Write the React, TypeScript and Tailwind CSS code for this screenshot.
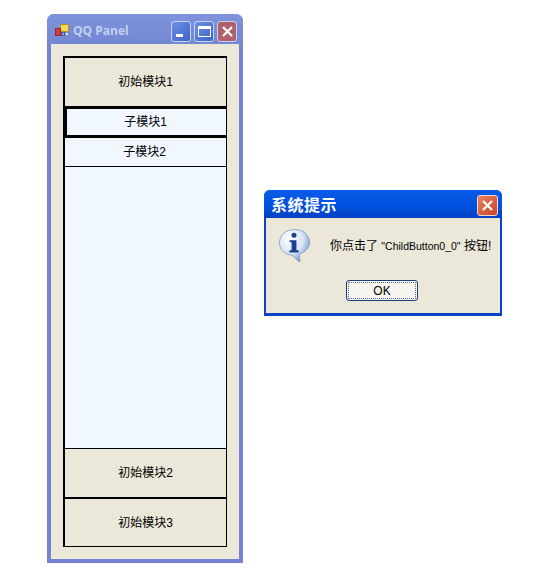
const cjk = "font-['Liberation_Sans','Noto_Sans_CJK_SC',sans-serif]";

function ModuleButton({ label, className }: { label: string; className: string }) {
  return (
    <div className={`flex items-center justify-center bg-[#ebe8d9] text-xs text-black ${className}`}>{label}</div>
  );
}

function ChildButton({ label, className }: { label: string; className: string }) {
  return (
    <div className={`flex items-center justify-center bg-[#f0f7ff] pr-[2px] text-xs text-black border-black ${className}`}>{label}</div>
  );
}

function AppIcon() {
  return (
    <svg width="16" height="14" viewBox="0 0 16 14" className="shrink-0">
      <rect x="6.5" y="0.5" width="8" height="7" fill="#f6d35a" stroke="#b08f30" />
      <rect x="1.5" y="4.5" width="5" height="7" fill="#d63c38" stroke="#8c2a2a" />
      <rect x="7.5" y="8.5" width="3" height="3" fill="#8fa0e0" stroke="#4a5aa8" />
      <rect x="11.5" y="8.5" width="3" height="3" fill="#f0f0f8" stroke="#7a88c0" />
    </svg>
  );
}

function InfoIcon() {
  return (
    <svg width="33" height="35" viewBox="0 0 34 36" className="shrink-0">
      <defs>
        <radialGradient id="bubble" cx="35%" cy="30%" r="75%">
          <stop offset="0%" stopColor="#ffffff" />
          <stop offset="60%" stopColor="#d6e4f5" />
          <stop offset="100%" stopColor="#6f93c4" />
        </radialGradient>
      </defs>
      <path
        d="M17 1.5C8 1.5 1.5 7.5 1.5 15c0 7 5.5 12.5 13 13l7 6.5c.8.5 1.3 0 1.2-.8l-1-6.6C28 25 32.5 20.5 32.5 15 32.5 7.5 26 1.5 17 1.5z"
        fill="url(#bubble)"
        stroke="#8aa6cc"
      />
      <circle cx="16.5" cy="7.5" r="2.6" fill="#1c3f94" />
      <path d="M12 12.5h7v10.5h2.2v2.2h-9.4V23H14v-8.3h-2z" fill="#1c3f94" />
    </svg>
  );
}

function WindowControl({ kind }: { kind: 'min' | 'max' | 'close' }) {
  const bg = kind === 'close' ? 'bg-[#b0626c]' : 'bg-gradient-to-br from-[#6f92e4] to-[#3c62c8]';
  return (
    <div className={`flex h-[21px] w-[20px] items-center justify-center rounded-[3px] border border-[#c6d2f0] ${bg}`}>
      {kind === 'min' && <div className="mt-[9px] mr-[4px] h-[3px] w-[7px] bg-white" />}
      {kind === 'max' && <div className="h-[11px] w-[13px] border border-t-[3px] border-white" />}
      {kind === 'close' && (
        <svg width="13" height="13" viewBox="0 0 13 13">
          <path d="M2 2l9 9M11 2l-9 9" stroke="#fff" strokeWidth="2.2" />
        </svg>
      )}
    </div>
  );
}

export default function App() {
  return (
    <div className={`flex h-[571px] w-[538px] items-start overflow-hidden bg-white pl-[47px] pt-[14px] ${cjk}`}>
      <div className="flex h-[549px] w-[196px] shrink-0 flex-col overflow-hidden rounded-t-[7px] bg-[#7484d2]">
        <div className="flex h-[30px] shrink-0 items-center bg-gradient-to-b from-[#7f92dc] to-[#7487d2] pl-[7px] pr-[6px] pt-[4px]">
          <AppIcon />
          <span className="ml-[3px] font-['Open_Sans',sans-serif] text-xs font-bold text-[#c3d0f0]">QQ Panel</span>
          <div className="ml-auto flex gap-[3px]">
            <WindowControl kind="min" />
            <WindowControl kind="max" />
            <WindowControl kind="close" />
          </div>
        </div>
        <div className="mx-[4px] mb-[4px] flex flex-1 flex-col bg-[#ebe8d9] px-[12px] pb-[12px] pt-[12px]">
          <div className="flex h-[491px] w-[164px] flex-col border-x-2 border-t-2 border-b border-black border-r-[1px]">
            <ModuleButton label="初始模块1" className="h-[48px] shrink-0" />
            <ChildButton label="子模块1" className="h-[32px] shrink-0 border-y-[3px] border-l-2" />
            <ChildButton label="子模块2" className="h-[29px] shrink-0 border-b" />
            <div className="flex-1 bg-[#f0f7ff]" />
            <ModuleButton label="初始模块2" className="h-[49px] shrink-0 border-t border-black" />
            <ModuleButton label="初始模块3" className="h-[49px] shrink-0 border-t-2 border-black" />
          </div>
        </div>
      </div>

      <div className="ml-[21px] mt-[176px] flex h-[126px] w-[238px] shrink-0 flex-col overflow-hidden rounded-t-[6px] bg-[#0b42c8]">
        <div className="flex h-[28px] shrink-0 items-center bg-gradient-to-b from-[#0a5ae6] via-[#0054e3] to-[#0340c4] pl-[7px] pr-[4px] pt-[3px]">
          <span className="text-base font-bold tracking-[0.5px] text-white">系统提示</span>
          <div className="ml-auto flex h-[21px] w-[21px] items-center justify-center rounded-[3px] border border-[#f4d8cc] bg-gradient-to-br from-[#e8805a] to-[#c8452a]">
            <svg width="13" height="13" viewBox="0 0 13 13">
              <path d="M2 2l9 9M11 2l-9 9" stroke="#fff" strokeWidth="2.2" />
            </svg>
          </div>
        </div>
        <div className="mx-[2px] mb-[3px] flex flex-1 flex-col bg-[#ebe8d9]">
          <div className="flex items-start pl-[12px] pt-[10px]">
            <InfoIcon />
            <span className="ml-[19px] mt-[10px] whitespace-nowrap text-xs text-black">
              你点击了 <span className="text-[10.5px]">"ChildButton0_0"</span> 按钮!
            </span>
          </div>
          <div className="mt-[17px] flex pl-[80px]">
            <div className="flex h-[21px] w-[72px] items-center justify-center rounded-[3px] border border-[#1c3f7a] bg-[#f6f5ef] text-xs text-black outline-1 -outline-offset-3 outline-dotted outline-[#5a6a90]">
              OK
            </div>
          </div>
        </div>
      </div>
    </div>
  );
}
